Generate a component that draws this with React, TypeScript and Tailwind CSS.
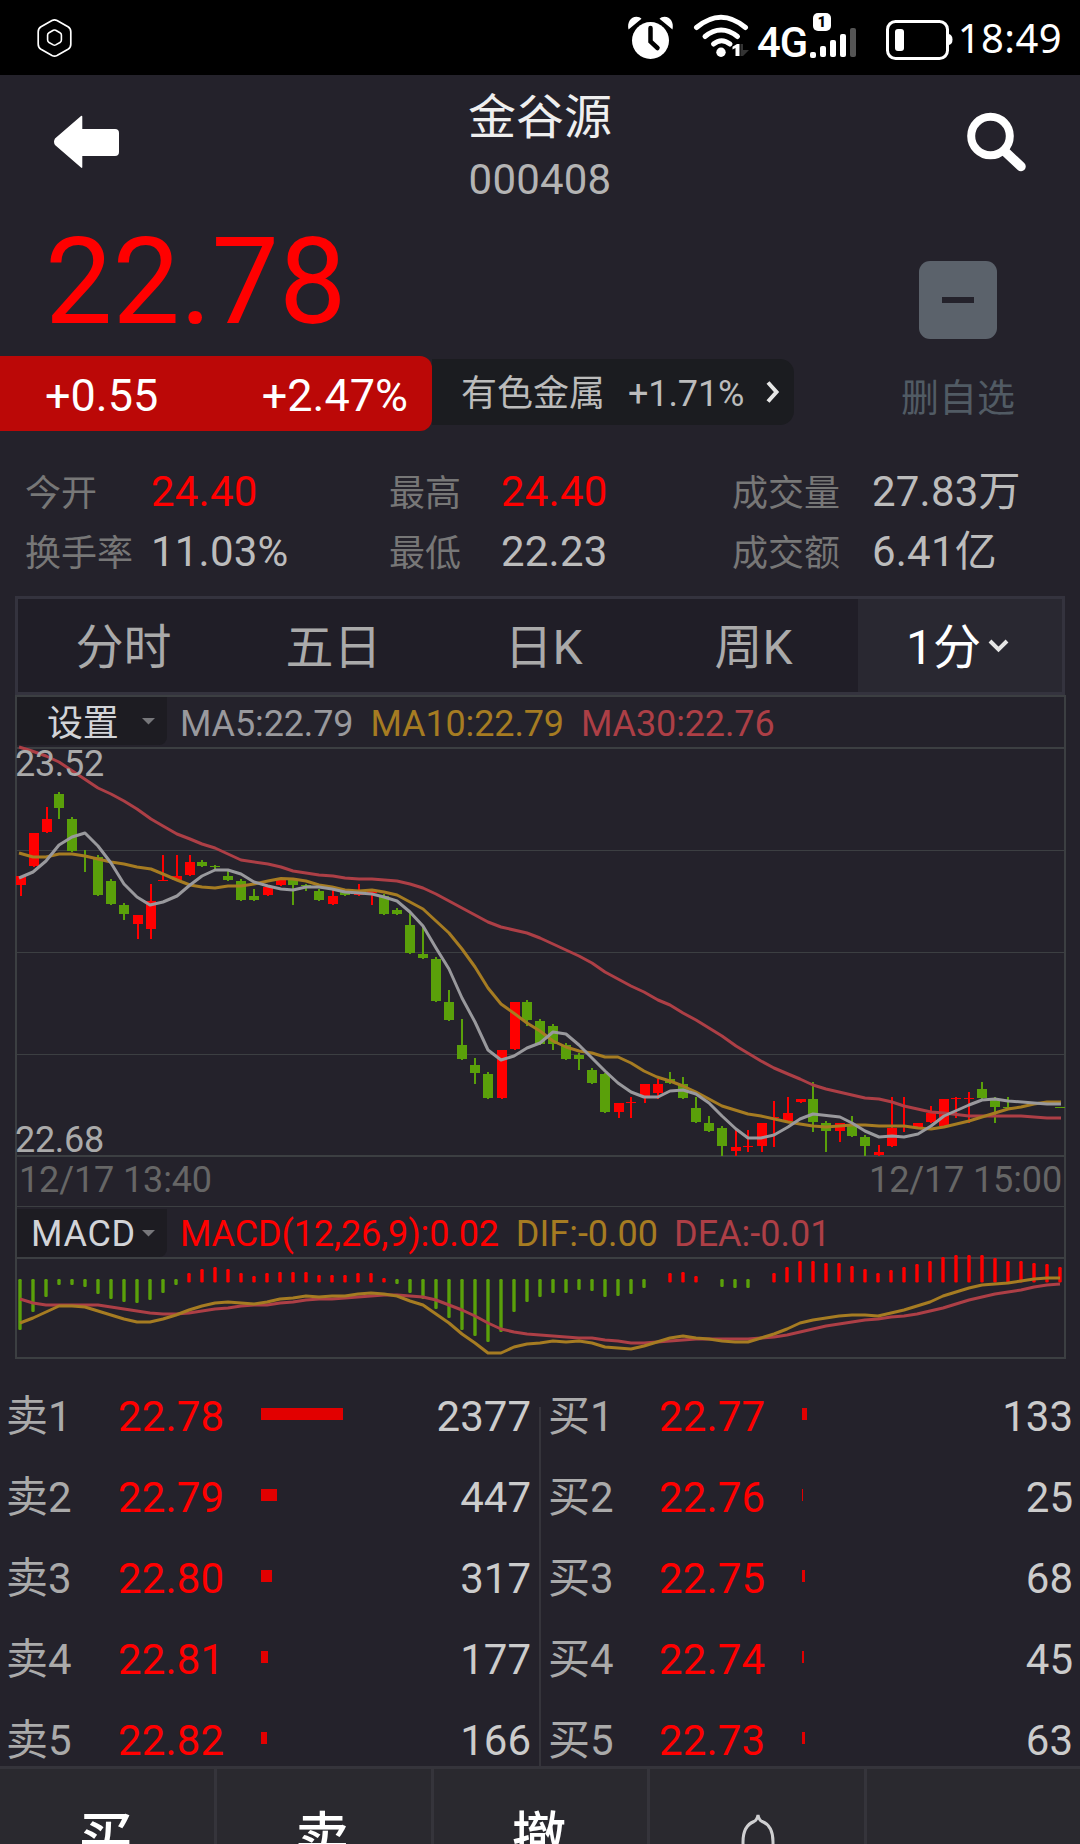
import React from "react";

type Candle = [x: number, up: 0 | 1, high: number, top: number, bottom: number, low: number];
type Point = [number, number];

const UP = "#ff0000";
const DOWN = "#5aa00a";
const GRAY = "#99999d";
const GOLD = "#a67c22";
const ROSE = "#ad3f46";

const candles: Candle[] = [
  [21, 1, 876, 876, 885, 896], [34, 1, 833, 833, 866, 867], [47, 1, 807, 819, 832, 833], [59, 0, 792, 794, 808, 819],
  [72, 0, 817, 819, 851, 852], [85, 0, 850, 850, 850, 872], [98, 0, 855, 857, 895, 896], [111, 0, 879, 881, 904, 905],
  [124, 0, 903, 905, 914, 920], [138, 1, 915, 915, 924, 939], [151, 1, 884, 901, 929, 939], [163, 1, 855, 880, 881, 881],
  [177, 1, 855, 876, 880, 880], [190, 1, 855, 862, 875, 876], [202, 0, 860, 862, 866, 867], [215, 0, 865, 866, 867, 869],
  [228, 0, 871, 876, 880, 881], [241, 0, 879, 881, 900, 901], [254, 0, 889, 896, 900, 901], [268, 1, 887, 887, 895, 896],
  [281, 1, 880, 880, 885, 886], [293, 0, 880, 880, 885, 905], [306, 0, 884, 885, 886, 891], [319, 0, 889, 891, 900, 901],
  [333, 1, 890, 896, 904, 905], [345, 0, 892, 892, 895, 896], [359, 1, 884, 894, 895, 896], [372, 1, 891, 891, 893, 905],
  [384, 0, 894, 896, 914, 915], [397, 0, 908, 910, 914, 915], [410, 0, 913, 925, 953, 954], [423, 0, 926, 954, 958, 959],
  [436, 0, 957, 959, 1001, 1002], [449, 0, 990, 1002, 1020, 1021], [462, 0, 1019, 1045, 1059, 1060], [475, 0, 1058, 1065, 1073, 1084],
  [488, 0, 1072, 1074, 1098, 1099], [502, 1, 1050, 1050, 1098, 1099], [515, 1, 1002, 1002, 1049, 1050], [527, 0, 1000, 1002, 1020, 1026],
  [540, 0, 1019, 1021, 1044, 1045], [553, 0, 1024, 1026, 1044, 1050], [566, 0, 1043, 1045, 1059, 1060], [579, 0, 1053, 1055, 1059, 1070],
  [592, 0, 1068, 1070, 1083, 1084], [605, 0, 1073, 1074, 1112, 1113], [619, 1, 1103, 1103, 1112, 1118], [631, 1, 1097, 1102, 1103, 1118],
  [645, 1, 1084, 1084, 1097, 1103], [658, 1, 1079, 1084, 1093, 1099], [670, 0, 1072, 1079, 1083, 1084], [683, 0, 1077, 1084, 1098, 1099],
  [696, 0, 1097, 1108, 1122, 1123], [709, 0, 1116, 1123, 1131, 1132], [722, 0, 1126, 1128, 1146, 1156], [736, 1, 1130, 1147, 1151, 1156],
  [748, 1, 1130, 1146, 1147, 1152], [762, 1, 1123, 1123, 1146, 1152], [774, 1, 1101, 1117, 1118, 1147], [788, 1, 1097, 1113, 1121, 1121],
  [801, 1, 1099, 1099, 1102, 1103], [813, 0, 1082, 1099, 1122, 1132], [826, 0, 1121, 1123, 1131, 1152], [840, 1, 1123, 1123, 1131, 1142],
  [852, 0, 1116, 1124, 1136, 1137], [865, 0, 1135, 1137, 1146, 1156], [879, 1, 1145, 1152, 1155, 1156], [892, 1, 1097, 1128, 1146, 1147],
  [904, 1, 1097, 1097, 1097, 1132], [918, 1, 1123, 1123, 1127, 1127], [931, 1, 1106, 1113, 1122, 1123], [944, 1, 1099, 1099, 1126, 1126],
  [956, 1, 1097, 1098, 1099, 1118], [969, 1, 1092, 1098, 1099, 1123], [982, 0, 1082, 1089, 1098, 1099], [995, 0, 1097, 1100, 1107, 1123],
  [1008, 0, 1097, 1107, 1108, 1108], [1060, 0, 1107, 1107, 1108, 1108],
];

const ma30: Point[] = [
  [19, 747], [32, 751], [46, 756], [59, 762], [98, 788], [111, 794], [124, 801], [137, 809], [151, 819], [163, 826], [177, 834],
  [190, 839], [202, 844], [215, 848], [241, 860], [268, 864], [281, 867], [293, 871], [319, 875], [333, 876], [345, 878], [359, 879],
  [372, 879], [397, 881], [410, 884], [423, 888], [436, 894], [449, 901], [488, 922], [501, 927], [527, 933], [540, 938], [566, 950],
  [579, 956], [592, 963], [605, 972], [631, 986], [644, 992], [658, 1000], [670, 1005], [683, 1013], [696, 1020], [709, 1028],
  [722, 1036], [736, 1046], [761, 1061], [774, 1068], [788, 1074], [800, 1079], [813, 1085], [826, 1089], [852, 1095], [865, 1098],
  [879, 1099], [892, 1102], [904, 1106], [931, 1112], [944, 1113], [969, 1116], [995, 1116], [1021, 1116], [1047, 1118], [1061, 1118],
];

const ma10: Point[] = [
  [19, 853], [33, 857], [46, 857], [59, 854], [72, 854], [85, 856], [98, 859], [111, 862], [124, 864], [137, 867], [151, 869],
  [163, 874], [177, 880], [190, 885], [202, 887], [215, 888], [228, 886], [241, 886], [254, 884], [268, 881], [281, 878.5],
  [293, 879], [306, 881], [319, 885], [332, 887], [345, 890], [359, 891], [372, 890], [384, 892], [397, 895], [423, 909], [436, 921],
  [449, 933], [462, 949], [475, 967], [488, 988], [501, 1004], [515, 1014], [527, 1023], [540, 1031], [553, 1041], [566, 1047],
  [579, 1051], [592, 1053], [605, 1057], [618, 1057], [631, 1063], [644, 1071], [657, 1077], [670, 1081], [683, 1086], [696, 1092],
  [709, 1099], [722, 1106], [748, 1114], [761, 1116], [788, 1122], [800, 1124], [813, 1126], [826, 1127], [852, 1125], [865, 1125],
  [879, 1126], [904, 1126], [918, 1128], [931, 1129], [944, 1127], [969, 1121], [982, 1117], [1008, 1109], [1021, 1107],
  [1034, 1104], [1047, 1102], [1061, 1102],
];

const ma5: Point[] = [
  [19, 878], [33, 872], [46, 861], [59, 845], [72, 837], [85, 833], [98, 846], [111, 863], [124, 884], [137, 897], [150, 905],
  [163, 902], [177, 896], [190, 885], [202, 876], [215, 870], [228, 870], [241, 874], [254, 882], [268, 886], [281, 889], [293, 890],
  [306, 887], [319, 887], [332, 889], [345, 892], [359, 893], [372, 894], [384, 897], [397, 901], [410, 912], [423, 926], [436, 948],
  [449, 969], [462, 998], [475, 1022], [488, 1050], [501, 1060], [514, 1056], [527, 1048], [540, 1043], [553, 1032], [566, 1034],
  [579, 1045], [592, 1058], [605, 1071], [618, 1083], [631, 1092], [644, 1097], [658, 1097], [670, 1091], [683, 1090], [696, 1094],
  [709, 1103], [722, 1116], [736, 1129], [748, 1138], [761, 1138], [774, 1135], [788, 1127], [800, 1119], [813, 1114], [840, 1117],
  [852, 1123], [865, 1131], [879, 1137], [892, 1136], [904, 1137], [918, 1134], [931, 1126], [944, 1116], [969, 1105], [982, 1100],
  [995, 1099], [1008, 1101], [1034, 1103], [1047, 1104], [1061, 1104],
];

// Histogram ends; values above the axis are up bars, null is an empty slot.
const histogram: (number | null)[] = [
  1330, 1312, 1297, 1285, 1285, 1287, 1294, 1299, 1302, 1303, 1300, 1293, 1285, 1273, 1269, 1267, 1269, 1273, 1276, 1273, 1272,
  1272, 1272, 1275, 1275, 1275, 1273, 1273, 1278, 1284, 1293, 1299, 1309, 1318, 1330, 1336, 1342, 1332, 1312, 1302, 1297, 1293,
  1293, 1290, 1291, 1297, 1296, 1294, 1288, null, 1273, 1272, 1276, null, 1287, 1288, 1288, null, 1273, 1267, 1261, 1261, 1263,
  1263, 1266, 1269, 1273, 1270, 1267, 1264, 1261, 1257, 1255, 1255, 1255, 1258, 1261, 1261, 1263, 1264, 1267,
];

const dif = [
  1323, 1318, 1312, 1306, 1306, 1307, 1311, 1315, 1319, 1322, 1322, 1319, 1315, 1310, 1306, 1303, 1302, 1303, 1304, 1302, 1299,
  1298, 1296, 1297, 1296, 1296, 1294, 1293, 1294, 1296, 1301, 1305, 1314, 1323, 1334, 1343, 1353, 1353, 1347, 1344, 1343, 1341,
  1342, 1341, 1343, 1347, 1348, 1349, 1346, 1342, 1338, 1336, 1338, 1339, 1341, 1342, 1342, 1338, 1334, 1329, 1323, 1320, 1318,
  1316, 1315, 1315, 1316, 1313, 1310, 1306, 1302, 1296, 1292, 1288, 1285, 1284, 1283, 1281, 1279, 1278, 1278,
];

const dea = [
  1299, 1303, 1305, 1305, 1305, 1305, 1305, 1307, 1309, 1311, 1313, 1314, 1314, 1313, 1311, 1309, 1308, 1306, 1305, 1305, 1303,
  1302, 1300, 1299, 1299, 1298, 1297, 1296, 1295, 1295, 1296, 1297, 1300, 1305, 1310, 1316, 1323, 1329, 1332, 1334, 1335, 1336,
  1337, 1338, 1338, 1340, 1341, 1343, 1343, 1342, 1341, 1340, 1339, 1339, 1339, 1339, 1339, 1338, 1337, 1335, 1332, 1329, 1326,
  1324, 1322, 1320, 1319, 1317, 1316, 1314, 1311, 1308, 1304, 1300, 1297, 1294, 1292, 1290, 1287, 1285, 1284,
];

const series = (values: number[]): Point[] => values.map((y, i) => [20 + 13 * i, y]);

function Line({ points, color }: { points: Point[]; color: string }) {
  return <polyline points={points.map((p) => p.join(",")).join(" ")} fill="none" stroke={color} strokeWidth={3} strokeLinejoin="round" />;
}

function StatusBar() {
  return (
    <div className="flex h-[75px] shrink-0 items-center bg-black text-white">
      <svg className="ml-[36px]" width="38" height="42" viewBox="36 17 38 42" fill="none" stroke="#fff">
        <path d="M52 20.500q2.500-1.300 5 0l11 6.300q2.800 1.700 2.800 5v12.400q0 3.300-2.800 5l-11 6.300q-2.500 1.300-5 0l-11-6.300q-2.800-1.700-2.800-5V31.800q0-3.300 2.800-5z" strokeWidth="1.700" />
        <path d="M53.300 30.300q1.200-.6 2.400 0l4.300 2.400q1.400.8 1.400 2.400v5q0 1.600-1.400 2.400l-4.300 2.400q-1.200.6-2.400 0L49 42.500q-1.400-.8-1.400-2.400v-5q0-1.600 1.400-2.400z" strokeWidth="1.600" />
      </svg>
      <svg className="mb-[1px] ml-auto" width="48" height="48" viewBox="627 14 48 48">
        <circle cx="650.500" cy="41.500" r="18.500" fill="#fff" />
        <path d="M628.500 30.500c-1.500-7 2-12.500 8-12.700 2 0 4 .7 5 2zM672.500 30.500c1.500-7-2-12.500-8-12.700-2 0-4 .7-5 2z" fill="#fff" />
        <path d="M650.500 29v13.500l7 6.500" fill="none" stroke="#000" strokeWidth="4.500" strokeLinecap="round" />
      </svg>
      <svg className="mb-[3px] ml-[17px]" width="60" height="48" viewBox="692 12 60 48" fill="none">
        <g stroke="#fff" strokeWidth="5" strokeLinecap="round">
          <path d="M696.500 27.500Q721 7 745.500 27.500" />
          <path d="M705 36.500Q721 23.500 737.500 36.500" />
          <path d="M713.500 44Q721.500 37.500 730 44" />
        </g>
        <circle cx="721" cy="52.300" r="4.700" fill="#fff" />
        <path d="M739.500 56h-4v-8l-3 1.500v-2.800l4.500-2.700h2.500z" fill="#fff" />
        <path d="M740.500 44h2.500v6h6l-6 6h-2.500z" fill="#333" />
      </svg>
      <div className="mt-[9px] ml-[5px] w-[52px]">
        <span className="block origin-left scale-x-[0.97] text-[43px] leading-[43px] font-medium tracking-tight">4G</span>
      </div>
      <div className="relative mb-[3px] h-[48px] w-[48px]">
        <svg width="48" height="48" viewBox="809 12 48 48" fill="#fff">
          <rect x="810" y="52" width="6" height="6" rx="2" />
          <rect x="820" y="46" width="6" height="11" rx="2" />
          <rect x="830" y="40" width="6" height="17" rx="2" />
          <rect x="840" y="34" width="6" height="23" rx="2" />
          <rect x="850" y="28" width="6" height="29" rx="2" fill="#555" />
          <rect x="813" y="13" width="18" height="18" rx="5" />
        </svg>
        <span className="absolute top-[2px] left-[4px] w-[18px] text-center text-[15px] leading-[17px] font-black text-black">1</span>
      </div>
      <svg className="mt-[4px] ml-[28px]" width="68" height="44" viewBox="885 18 68 44">
        <rect x="887.500" y="21.500" width="60" height="37" rx="8" fill="none" stroke="#fff" strokeWidth="3" />
        <rect x="895" y="29" width="9" height="22" rx="3" fill="#fff" />
        <path d="M949 34q3.500 1 3.500 5.500t-3.500 5.500z" fill="#fff" />
      </svg>
      <span className="mr-[18px] ml-[5px] font-['Noto_Sans'] text-[40px] leading-[75px] tracking-[0.4px]">18:49</span>
    </div>
  );
}

function Header() {
  return (
    <header className="flex h-[140px] shrink-0 justify-between">
      <svg className="mt-[38px] ml-[52px]" width="70" height="58" viewBox="52 113 70 58">
        <path d="M55 138.500 81 116q1.300-1 1.300.8V129H115q4 0 4 4v19q0 4-4 4H82.300v11q0 1.500-1.300.5L55 145q-2-3.200 0-6.500z" fill="#fff" />
      </svg>
      <div className="mr-[8px] flex flex-col items-center pt-[15px]">
        <h1 className="text-[48px] leading-[56px] text-[#efefef]">金谷源</h1>
        <span className="mt-[9px] text-[42px] leading-[50px] tracking-[0.2px] text-[#b4b4b4]">000408</span>
      </div>
      <svg className="mt-[36px] mr-[50px]" width="64" height="64" viewBox="966 111 64 64" fill="none" stroke="#fff">
        <circle cx="990.500" cy="136" r="19.300" strokeWidth="8" />
        <path d="M1005 151.500 1021 166.500" strokeWidth="9.500" strokeLinecap="round" />
      </svg>
    </header>
  );
}

function Quote() {
  return (
    <section className="flex h-[216px] shrink-0 justify-between">
      <div className="flex flex-col pt-[7px]">
        <strong className="pl-[45px] text-[120px] leading-[120px] font-normal text-[#ff0000]">22.78</strong>
        <div className="mt-[14px] flex items-start">
          <div className="flex h-[75px] w-[432px] items-center justify-between rounded-r-[12px] bg-[#bb0807] pt-[5px] pr-[24px] pl-[45px] text-[45px] leading-[70px] text-white">
            <span>+0.55</span>
            <span>+2.47%</span>
          </div>
          <div className="mt-[3px] flex h-[66px] w-[362px] items-center rounded-r-[14px] bg-[#1b1c20] pl-[29px] text-[36px] leading-[61px] text-[#bcbcbc]">
            <span className="pt-[5px]">有色金属</span>
            <span className="ml-[23px] pt-[5px] tracking-[-0.13px]">+1.71%</span>
            <svg className="ml-[20px]" width="18" height="26" viewBox="0 0 18 26" fill="none" stroke="#e6e6e6" strokeWidth="4">
              <path d="M4 3.500 12.500 13 4 22.500" />
            </svg>
          </div>
        </div>
      </div>
      <div className="mr-[47px] flex w-[150px] flex-col items-center pt-[46px]">
        <button className="flex size-[78px] items-center justify-center rounded-[11px] bg-[#5b626b]">
          <span className="h-[6px] w-[32px] bg-[#24222b]" />
        </button>
        <span className="mt-[37px] text-[38px] leading-[44px] text-[#515b64]">删自选</span>
      </div>
    </section>
  );
}

function Stat({ label, value, up }: { label: string; value: string; up?: boolean }) {
  return (
    <>
      <span className="pt-[5px] text-[36px] leading-[55px] text-[#777777]">{label}</span>
      <span className={up ? "text-[42px] tracking-[0.2px] text-[#ff0000]" : "text-[42px] tracking-[0.2px] text-[#bcbcbc]"}>{value}</span>
    </>
  );
}

function Stats() {
  return (
    <section className="grid h-[165px] shrink-0 grid-cols-[126px_238px_112px_231px_140px_200px] content-start pt-[31px] pl-[25px] leading-[60px] whitespace-nowrap">
      <Stat label="今开" value="24.40" up />
      <Stat label="最高" value="24.40" up />
      <Stat label="成交量" value="27.83万" />
      <Stat label="换手率" value="11.03%" />
      <Stat label="最低" value="22.23" />
      <Stat label="成交额" value="6.41亿" />
    </section>
  );
}

function Tabs() {
  return (
    <nav className="ml-[15px] flex h-[99px] w-[1050px] shrink-0 border-[3px] border-[#34333e] bg-[#201e27] text-[48px] leading-[97px] text-[#aaaaaa]">
      {["分时", "五日", "日K", "周K"].map((t) => (
        <span key={t} className="h-[93px] w-[210px] pl-[1px] text-center">{t}</span>
      ))}
      <span className="flex h-[93px] flex-1 items-center bg-[#292831] pl-[48px] text-white">
        <span className="pt-[4px] leading-[89px]">1分</span>
        <svg className="ml-[6px]" width="24" height="18" viewBox="0 0 24 18" fill="none" stroke="#e6e6e6" strokeWidth="4">
          <path d="M3 4 11.500 12.500 20 4" />
        </svg>
      </span>
    </nav>
  );
}

function Picker({ label, text }: { label: string; text: string }) {
  return (
    <div className="flex h-[48px] w-[150px] shrink-0 items-center justify-end rounded-br-[8px] bg-[#1d1c22] pr-[12px] text-[#d2d4d8]">
      <span className={text}>{label}</span>
      <svg width="13" height="7" viewBox="0 0 13 7">
        <path d="M0 0h13L6.500 6.500z" fill="#77777b" />
      </svg>
    </div>
  );
}

function Chart() {
  return (
    <section className="ml-[15px] w-[1051px] shrink-0 border-2 border-[#3c3f42] text-[36px] tracking-[-0.13px]">
      <div className="flex h-[50px] leading-[54px]">
        <Picker label="设置" text="flex-1 pt-[6px] pl-[30px] leading-[50px]" />
        <span className="ml-[13px] text-[#99999d]">MA5:22.79</span>
        <span className="ml-[17px] text-[#a67c22]">MA10:22.79</span>
        <span className="ml-[17px] text-[#ad3f46]">MA30:22.76</span>
      </div>
      <div className="relative border-y-2 border-[#3c3f42]">
        <svg className="block overflow-visible" width="1047" height="406" viewBox="17 749 1047 406">
          <g fill="#3c3f42" shapeRendering="crispEdges">
            <rect x="17" y="850" width="1047" height="1" />
            <rect x="17" y="952" width="1047" height="1" />
            <rect x="17" y="1054" width="1047" height="1" />
          </g>
          <g shapeRendering="crispEdges">
            {candles.map(([x, up, high, top, bottom, low]) => (
              <g key={x} fill={up ? UP : DOWN}>
                <rect x={x - 1} y={high} width={2} height={low - high} />
                <rect x={x - 5} y={top} width={10} height={bottom - top} />
              </g>
            ))}
          </g>
          <Line points={ma30} color={ROSE} />
          <Line points={ma10} color={GOLD} />
          <Line points={ma5} color={GRAY} />
        </svg>
        <span className="absolute top-[1px] left-[-2px] leading-[28px] tracking-[-0.3px] text-[#aaaaaa]">23.52</span>
        <span className="absolute bottom-[1px] left-[-2px] leading-[28px] tracking-[-0.3px] text-[#aaaaaa]">22.68</span>
      </div>
      <div className="flex h-[50px] justify-between border-b border-[#3c3f42] pr-[2px] pl-[2px] leading-[47px] text-[#666666]">
        <span>12/17 13:40</span>
        <span>12/17 15:00</span>
      </div>
      <div className="flex h-[50px] leading-[54px]">
        <div className="pt-[2px]">
          <Picker label="MACD" text="flex-1 pt-[2px] pl-[14px] tracking-[0.7px] leading-[52px]" />
        </div>
        <span className="ml-[13px] text-[#ff0000]">MACD(12,26,9):0.02</span>
        <span className="ml-[17px] tracking-normal text-[#a67c22]">DIF:-0.00</span>
        <span className="ml-[16px] tracking-normal text-[#ad3f46]">DEA:-0.01</span>
      </div>
      <div className="border-t-2 border-[#3c3f42]">
        <svg className="block overflow-visible" width="1047" height="98" viewBox="17 1259 1047 98">
          {histogram.map((y, i) =>
            y === null ? null : y > 1279 ? (
              <rect key={i} x={18.3 + 13 * i} y={1279} width={3.4} height={y - 1279} rx={1.2} fill={DOWN} />
            ) : (
              <rect key={i} x={18.3 + 13 * i} y={y} width={3.4} height={1282.5 - y} rx={1.2} fill={UP} />
            ),
          )}
          <Line points={series(dea)} color={ROSE} />
          <Line points={series(dif)} color={GOLD} />
        </svg>
      </div>
    </section>
  );
}

type Order = [label: string, price: string, bar: number, volume: string];

const sells: Order[] = [
  ["卖1", "22.78", 82, "2377"],
  ["卖2", "22.79", 16, "447"],
  ["卖3", "22.80", 11, "317"],
  ["卖4", "22.81", 7, "177"],
  ["卖5", "22.82", 6, "166"],
];

const buys: Order[] = [
  ["买1", "22.77", 5, "133"],
  ["买2", "22.76", 1, "25"],
  ["买3", "22.75", 3, "68"],
  ["买4", "22.74", 2, "45"],
  ["买5", "22.73", 3, "63"],
];

function Orders({ rows, pad, labelWidth }: { rows: Order[]; pad: string; labelWidth: string }) {
  return (
    <div className={`flex flex-1 flex-col ${pad}`}>
      {rows.map(([label, price, bar, volume]) => (
        <div key={label} className="flex h-[81px] items-center text-[42px] leading-[81px]">
          <span className={`text-[#aaaaaa] ${labelWidth}`}>{label}</span>
          <span className="w-[143px] tracking-[0.15px] text-[#ff0000]">{price}</span>
          <span className="mb-[6px] h-[12px] bg-[#e20000]" style={{ width: bar }} />
          <span className="ml-auto text-[#cccccc]">{volume}</span>
        </div>
      ))}
    </div>
  );
}

function ActionBar() {
  return (
    <footer className="flex h-[78px] shrink-0 overflow-hidden border-t-[3px] border-[#35343b] bg-[#2a292f] text-[54px] leading-[140px] font-medium text-white">
      {["买", "卖", "撤"].map((t) => (
        <span key={t} className="w-[216.800px] shrink-0 border-r-[3px] border-[#35343b] pr-[3px] text-center">{t}</span>
      ))}
      <span className="flex w-[216.800px] shrink-0 justify-center border-r-[3px] border-[#35343b] pt-[42px] pl-[2px]">
        <svg width="44" height="56" viewBox="736 1811 44 56" fill="none" stroke="#cfcfd1" strokeWidth="3">
          <path d="M738 1862q5-4 5-12v-8c0-11 4.500-18 11-20.500q3-1.500 4-6.500 1 5 4 6.500c6.500 2.500 11 9.500 11 20.500v8q0 8 5 12z" />
        </svg>
      </span>
    </footer>
  );
}

export default function App() {
  return (
    <main className="flex h-[1844px] w-[1080px] flex-col overflow-hidden bg-[#24222b] font-['Roboto','Noto_Sans_CJK_SC',sans-serif]">
      <StatusBar />
      <Header />
      <Quote />
      <Stats />
      <Tabs />
      <Chart />
      <section className="flex h-[407px] shrink-0 pt-[17px]">
        <Orders rows={sells} pad="pr-[8px] pl-[6px]" labelWidth="w-[112px]" />
        <div className="mt-[31px] w-[2px] shrink-0 bg-[#35343b]" />
        <Orders rows={buys} pad="pr-[7px] pl-[7px]" labelWidth="w-[111px]" />
      </section>
      <ActionBar />
    </main>
  );
}
